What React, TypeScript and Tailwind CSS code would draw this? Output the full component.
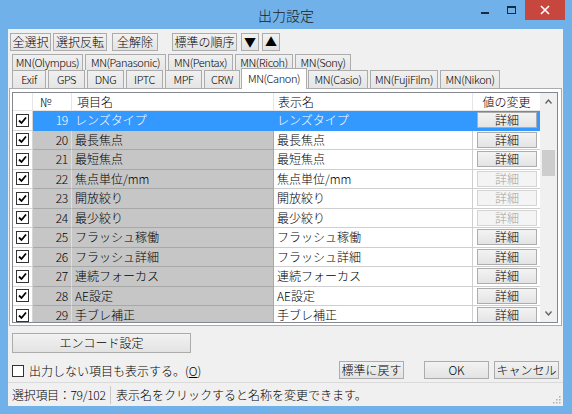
import React from 'react';

const font = { fontFamily: '"Noto Sans CJK JP", "Noto Sans", sans-serif' };

type Row = { no: number; name: string; enabled: boolean };

const rows: Row[] = [
  { no: 19, name: 'レンズタイプ', enabled: true },
  { no: 20, name: '最長焦点', enabled: true },
  { no: 21, name: '最短焦点', enabled: true },
  { no: 22, name: '焦点単位/mm', enabled: false },
  { no: 23, name: '開放絞り', enabled: false },
  { no: 24, name: '最少絞り', enabled: false },
  { no: 25, name: 'フラッシュ稼働', enabled: true },
  { no: 26, name: 'フラッシュ詳細', enabled: true },
  { no: 27, name: '連続フォーカス', enabled: true },
  { no: 28, name: 'AE設定', enabled: true },
  { no: 29, name: '手ブレ補正', enabled: true },
];

const tabsBack = [
  { label: 'MN(Olympus)', w: 'w-[71px]' },
  { label: 'MN(Panasonic)', w: 'w-[81px]' },
  { label: 'MN(Pentax)', w: 'w-[65px]' },
  { label: 'MN(Ricoh)', w: 'w-[58px]' },
  { label: 'MN(Sony)', w: 'w-[56px]' },
];

const tabsFront = [
  { label: 'Exif', w: 'w-[34px]' },
  { label: 'GPS', w: 'w-[37px]' },
  { label: 'DNG', w: 'w-[37px]' },
  { label: 'IPTC', w: 'w-[37px]' },
  { label: 'MPF', w: 'w-[37px]' },
  { label: 'CRW', w: 'w-[36px]' },
  { label: 'MN(Canon)', w: 'w-[66px]', active: true },
  { label: 'MN(Casio)', w: 'w-[60px]' },
  { label: 'MN(FujiFilm)', w: 'w-[68px]' },
  { label: 'MN(Nikon)', w: 'w-[60px]' },
];

const Btn: React.FC<{ className?: string; children: React.ReactNode }> = ({ className = '', children }) => (
  <button
    className={`flex items-center justify-center border border-[#acacac] bg-linear-to-b from-[#f2f2f2] to-[#e3e3e3] text-[12px] leading-none text-black ${className}`}
  >
    {children}
  </button>
);

const CheckBox: React.FC<{ checked?: boolean }> = ({ checked = true }) => (
  <div className="flex h-[13px] w-[13px] items-center justify-center border border-[#333333] bg-white">
    {checked && (
      <svg width="9" height="9" viewBox="0 0 9 9">
        <path d="M1 4.5 L3.5 7 L8 1.5" fill="none" stroke="#000" strokeWidth="1.8" />
      </svg>
    )}
  </div>
);

const GridRow: React.FC<{ row: Row; selected: boolean }> = ({ row, selected }) => (
  <div className="flex h-[19.5px] shrink-0 text-[12px] leading-none">
    <div className="flex w-[20px] items-center justify-center border-b border-r border-[#d5d5d5] bg-white">
      <CheckBox />
    </div>
    <div
      className={`flex w-[39px] items-center justify-end border-b border-r pr-[3px] tracking-[-0.3px] ${
        selected ? 'border-[#3399ff] bg-[#3399ff] text-white' : 'border-b-[#a8a8a8] border-r-[#dedede] bg-[#c6c6c6] text-black'
      }`}
    >
      {row.no}
    </div>
    <div
      className={`flex w-[202px] items-center border-b border-r pl-[3px] ${
        selected ? 'border-[#3399ff] bg-[#3399ff] text-white' : 'border-[#a8a8a8] bg-[#c6c6c6] text-black'
      }`}
    >
      {row.name}
    </div>
    <div
      className={`flex w-[199px] items-center border-b border-r pl-[3px] ${
        selected ? 'border-[#3399ff] bg-[#3399ff] text-white' : 'border-[#cfcfcf] bg-white text-black'
      }`}
    >
      {row.name}
    </div>
    <div
      className={`flex w-[67px] items-center justify-center border-b pl-[1px] ${
        selected ? 'border-[#3399ff] bg-[#3399ff]' : 'border-[#cfcfcf] bg-white'
      }`}
    >
      {row.enabled ? (
        <div className="flex h-[16px] w-[60px] items-center justify-center border border-[#adadad] bg-linear-to-b from-[#f3f3f3] to-[#e4e4e4] text-black">
          詳細
        </div>
      ) : (
        <div className="flex h-[16px] w-[60px] items-center justify-center border border-[#d4d4d4] bg-[#f4f4f4] text-[#a3a3a3]">
          詳細
        </div>
      )}
    </div>
  </div>
);

const tabText = 'text-[11px] leading-none tracking-[-0.4px] whitespace-nowrap';

const App: React.FC = () => {
  return (
    <div style={font} className="flex h-[414px] w-[572px] flex-col overflow-hidden bg-[#6fb1e8] font-light text-black">
      {/* title bar */}
      <div className="relative flex h-[29px] shrink-0 items-center justify-center">
        <span className="pt-[1px] text-[14px] leading-none text-[#1b1b1b]">出力設定</span>
        <div className="absolute right-[7px] top-0 flex h-[20px] items-start">
          <div className="flex h-[20px] w-[26px] items-center justify-center">
            <div className="mt-[6px] h-[2px] w-[8px] bg-[#1c2b3a]" />
          </div>
          <div className="flex h-[20px] w-[27px] items-center justify-center">
            <div className="h-[8px] w-[9px] border border-t-2 border-[#1c2b3a]" />
          </div>
          <div className="flex h-[20px] w-[40px] items-center justify-center bg-[#c7463d]">
            <svg width="10" height="10" viewBox="0 0 10 10">
              <path d="M1 1 L9 9 M9 1 L1 9" stroke="#fff" strokeWidth="1.6" />
            </svg>
          </div>
        </div>
      </div>

      {/* client area */}
      <div className="mb-[8px] ml-[8px] mr-[9px] flex flex-1 flex-col bg-[#f0f0f0]">
        {/* toolbar */}
        <div className="flex shrink-0 pl-[2px] pt-[4px]">
          <Btn className="h-[18px] w-[41px]">全選択</Btn>
          <Btn className="ml-[2px] h-[18px] w-[54px]">選択反転</Btn>
          <Btn className="ml-[5px] h-[18px] w-[46px]">全解除</Btn>
          <Btn className="ml-[14px] h-[18px] w-[65px]">標準の順序</Btn>
          <Btn className="ml-[4px] h-[18px] w-[18px] text-[11px]">▼</Btn>
          <Btn className="ml-[3px] h-[18px] w-[18px] text-[11px]">▲</Btn>
        </div>

        {/* tabs */}
        <div className="mt-[3px] flex h-[16px] shrink-0 gap-[2px] pl-[4px]">
          {tabsBack.map((t) => (
            <div
              key={t.label}
              className={`flex ${t.w} items-center justify-center border border-b-0 border-[#acacac] bg-linear-to-b from-[#f0f0f0] to-[#e5e5e5] ${tabText}`}
            >
              {t.label}
            </div>
          ))}
        </div>
        <div className="relative z-10 flex h-[18px] shrink-0 items-end gap-[2px] pl-[4px]">
          {tabsFront.map((t) =>
            t.active ? (
              <div
                key={t.label}
                className={`-mx-[1px] -mb-[1px] flex h-[21px] ${t.w} items-center justify-center border border-b-0 border-[#acacac] bg-white pb-[1px] ${tabText}`}
              >
                {t.label}
              </div>
            ) : (
              <div
                key={t.label}
                className={`flex h-[18px] ${t.w} items-center justify-center border border-b-0 border-[#acacac] bg-linear-to-b from-[#f0f0f0] to-[#e5e5e5] ${tabText}`}
              >
                {t.label}
              </div>
            )
          )}
        </div>

        {/* tab panel */}
        <div className="mx-[1px] flex h-[238px] shrink-0 flex-col border border-[#acacac] bg-white pb-[2px] pl-[2px] pr-[3px] pt-[3px]">
          <div className="flex flex-1 overflow-hidden border border-[#828790]">
            <div className="flex w-[527px] flex-col overflow-hidden">
              {/* header */}
              <div className="flex h-[18px] shrink-0 border-b border-[#e5e5e5] bg-white text-[12px] leading-none">
                <div className="w-[20px] border-r border-[#e5e5e5]" />
                <div className="flex w-[39px] items-center border-r border-[#e5e5e5] pl-[7px]">№</div>
                <div className="flex w-[202px] items-center border-r border-[#e5e5e5] pl-[5px]">項目名</div>
                <div className="flex w-[199px] items-center border-r border-[#e5e5e5] pl-[4px]">表示名</div>
                <div className="flex w-[67px] items-center justify-center">値の変更</div>
              </div>
              {rows.map((r, i) => (
                <GridRow key={r.no} row={r} selected={i === 0} />
              ))}
            </div>
            {/* scrollbar */}
            <div className="flex w-[17px] flex-col bg-[#f0f0f0]">
              <div className="flex h-[17px] shrink-0 items-center justify-center">
                <svg width="7" height="5" viewBox="0 0 7 5">
                  <path d="M0.5 4.5 L3.5 1 L6.5 4.5" fill="none" stroke="#606060" strokeWidth="1.3" />
                </svg>
              </div>
              <div className="flex flex-1 flex-col">
                <div className="mx-[2px] mt-[40px] h-[26px] bg-[#cdcdcd]" />
              </div>
              <div className="flex h-[17px] shrink-0 items-center justify-center">
                <svg width="7" height="5" viewBox="0 0 7 5">
                  <path d="M0.5 0.5 L3.5 4 L6.5 0.5" fill="none" stroke="#606060" strokeWidth="1.3" />
                </svg>
              </div>
            </div>
          </div>
        </div>

        {/* encode button */}
        <Btn className="ml-[4px] mt-[7px] h-[20px] w-[179px] shrink-0">エンコード設定</Btn>

        {/* options row */}
        <div className="mt-[5px] flex h-[24px] shrink-0 items-center pl-[4px] pr-[4px]">
          <div className="flex items-center pt-[2px]">
            <div className="h-[12px] w-[12px] border border-[#333333] bg-white" />
            <span className="ml-[5px] text-[12px] leading-none">
              出力しない項目も表示する。(<span className="underline">O</span>)
            </span>
          </div>
          <div className="ml-auto flex">
            <Btn className="h-[18px] w-[65px]">標準に戻す</Btn>
            <Btn className="ml-[20px] h-[18px] w-[65px]">OK</Btn>
            <Btn className="ml-[5px] h-[18px] w-[65px]">キャンセル</Btn>
          </div>
        </div>

        {/* status bar */}
        <div className="relative flex flex-1 items-center border-t border-[#dadada] text-[12px] leading-none">
          <span className="w-[102px] whitespace-nowrap pl-[4px] tracking-[-0.3px]">選択項目：79/102</span>
          <div className="h-[18px] w-px bg-[#c8c8c8]" />
          <span className="pl-[5px]">表示名をクリックすると名称を変更できます。</span>
          <svg className="absolute bottom-[2px] right-[2px]" width="8" height="8" viewBox="0 0 8 8">
            <rect x="6" y="0" width="1.5" height="1.5" fill="#b0b0b0" />
            <rect x="3" y="3" width="1.5" height="1.5" fill="#b0b0b0" />
            <rect x="6" y="3" width="1.5" height="1.5" fill="#b0b0b0" />
            <rect x="0" y="6" width="1.5" height="1.5" fill="#b0b0b0" />
            <rect x="3" y="6" width="1.5" height="1.5" fill="#b0b0b0" />
            <rect x="6" y="6" width="1.5" height="1.5" fill="#b0b0b0" />
          </svg>
        </div>
      </div>
    </div>
  );
};

export default App;
